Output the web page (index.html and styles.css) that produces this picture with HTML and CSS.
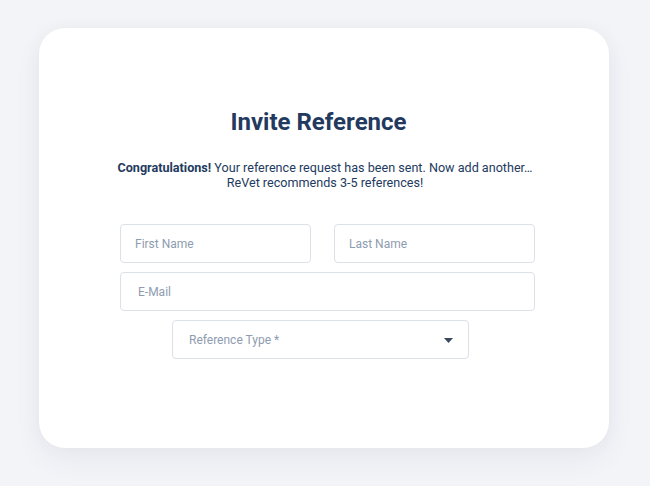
FILE: index.html
```html
<!DOCTYPE html>
<html>
<head>
<meta charset="utf-8">
<link rel="stylesheet" href="styles.css">
</head>
<body>
<div class="page">
  <div class="card">
    <h1 class="title">Invite Reference</h1>
    <p class="msg"><strong>Congratulations!</strong> Your reference request has been sent. Now add another…<br>ReVet recommends 3-5 references!</p>
    <form class="form">
      <div class="row">
        <div class="field first"><span class="ph">First Name</span></div>
        <div class="field last"><span class="ph">Last Name</span></div>
      </div>
      <div class="field email"><span class="ph">E-Mail</span></div>
      <div class="field select"><span class="ph">Reference Type *</span>
        <svg class="caret" width="9" height="5" viewBox="0 0 9 5"><path d="M0 0h9L4.5 5z" fill="#3a4a5e"/></svg>
      </div>
    </form>
  </div>
</div>
</body>
</html>
```
FILE: styles.css
```css
* { box-sizing: border-box; }
html, body { margin: 0; padding: 0; }
body {
  background: #f3f4f8;
  font-family: Roboto, "Liberation Sans", sans-serif;
  width: 650px;
  height: 486px;
  overflow: hidden;
}
.page {
  padding: 28px 41px 0 39px;
}
.card {
  width: 570px;
  height: 420px;
  background: #fff;
  border-radius: 26px;
  box-shadow: 0 12px 30px rgba(30, 40, 70, 0.05), 0 0 20px rgba(30, 40, 70, 0.03);
  padding-top: 80px;
  display: flex;
  flex-direction: column;
  align-items: center;
}
.title {
  margin: 0;
  font-size: 24px;
  font-weight: 700;
  color: #233a5e;
  line-height: 28px;
  margin-left: -11px;
}
.msg {
  margin: 24px 0 0;
  font-size: 12.6px;
  line-height: 15px;
  color: #233a5e;
  text-align: center;
  margin-left: 2px;
}
.msg strong { font-weight: 700; }
.form {
  margin-top: 34px;
  width: 415px;
  margin-left: 7px;
  display: flex;
  flex-direction: column;
  align-items: center;
  gap: 9px;
}
.row {
  display: flex;
  justify-content: space-between;
  width: 100%;
}
.field {
  height: 39px;
  border: 1px solid #dce1e8;
  border-radius: 4px;
  display: flex;
  align-items: center;
  font-size: 12px;
  color: #8e9cb0;
}
.first { width: 191px; padding-left: 14px; }
.last { width: 201px; padding-left: 14px; }
.email { width: 100%; height: 39px; padding-left: 17px; }
.select {
  width: 297px;
  margin-left: -14px;
  padding-left: 16px;
  padding-right: 15px;
  justify-content: space-between;
}
.caret { margin-top: 2px; }
```
